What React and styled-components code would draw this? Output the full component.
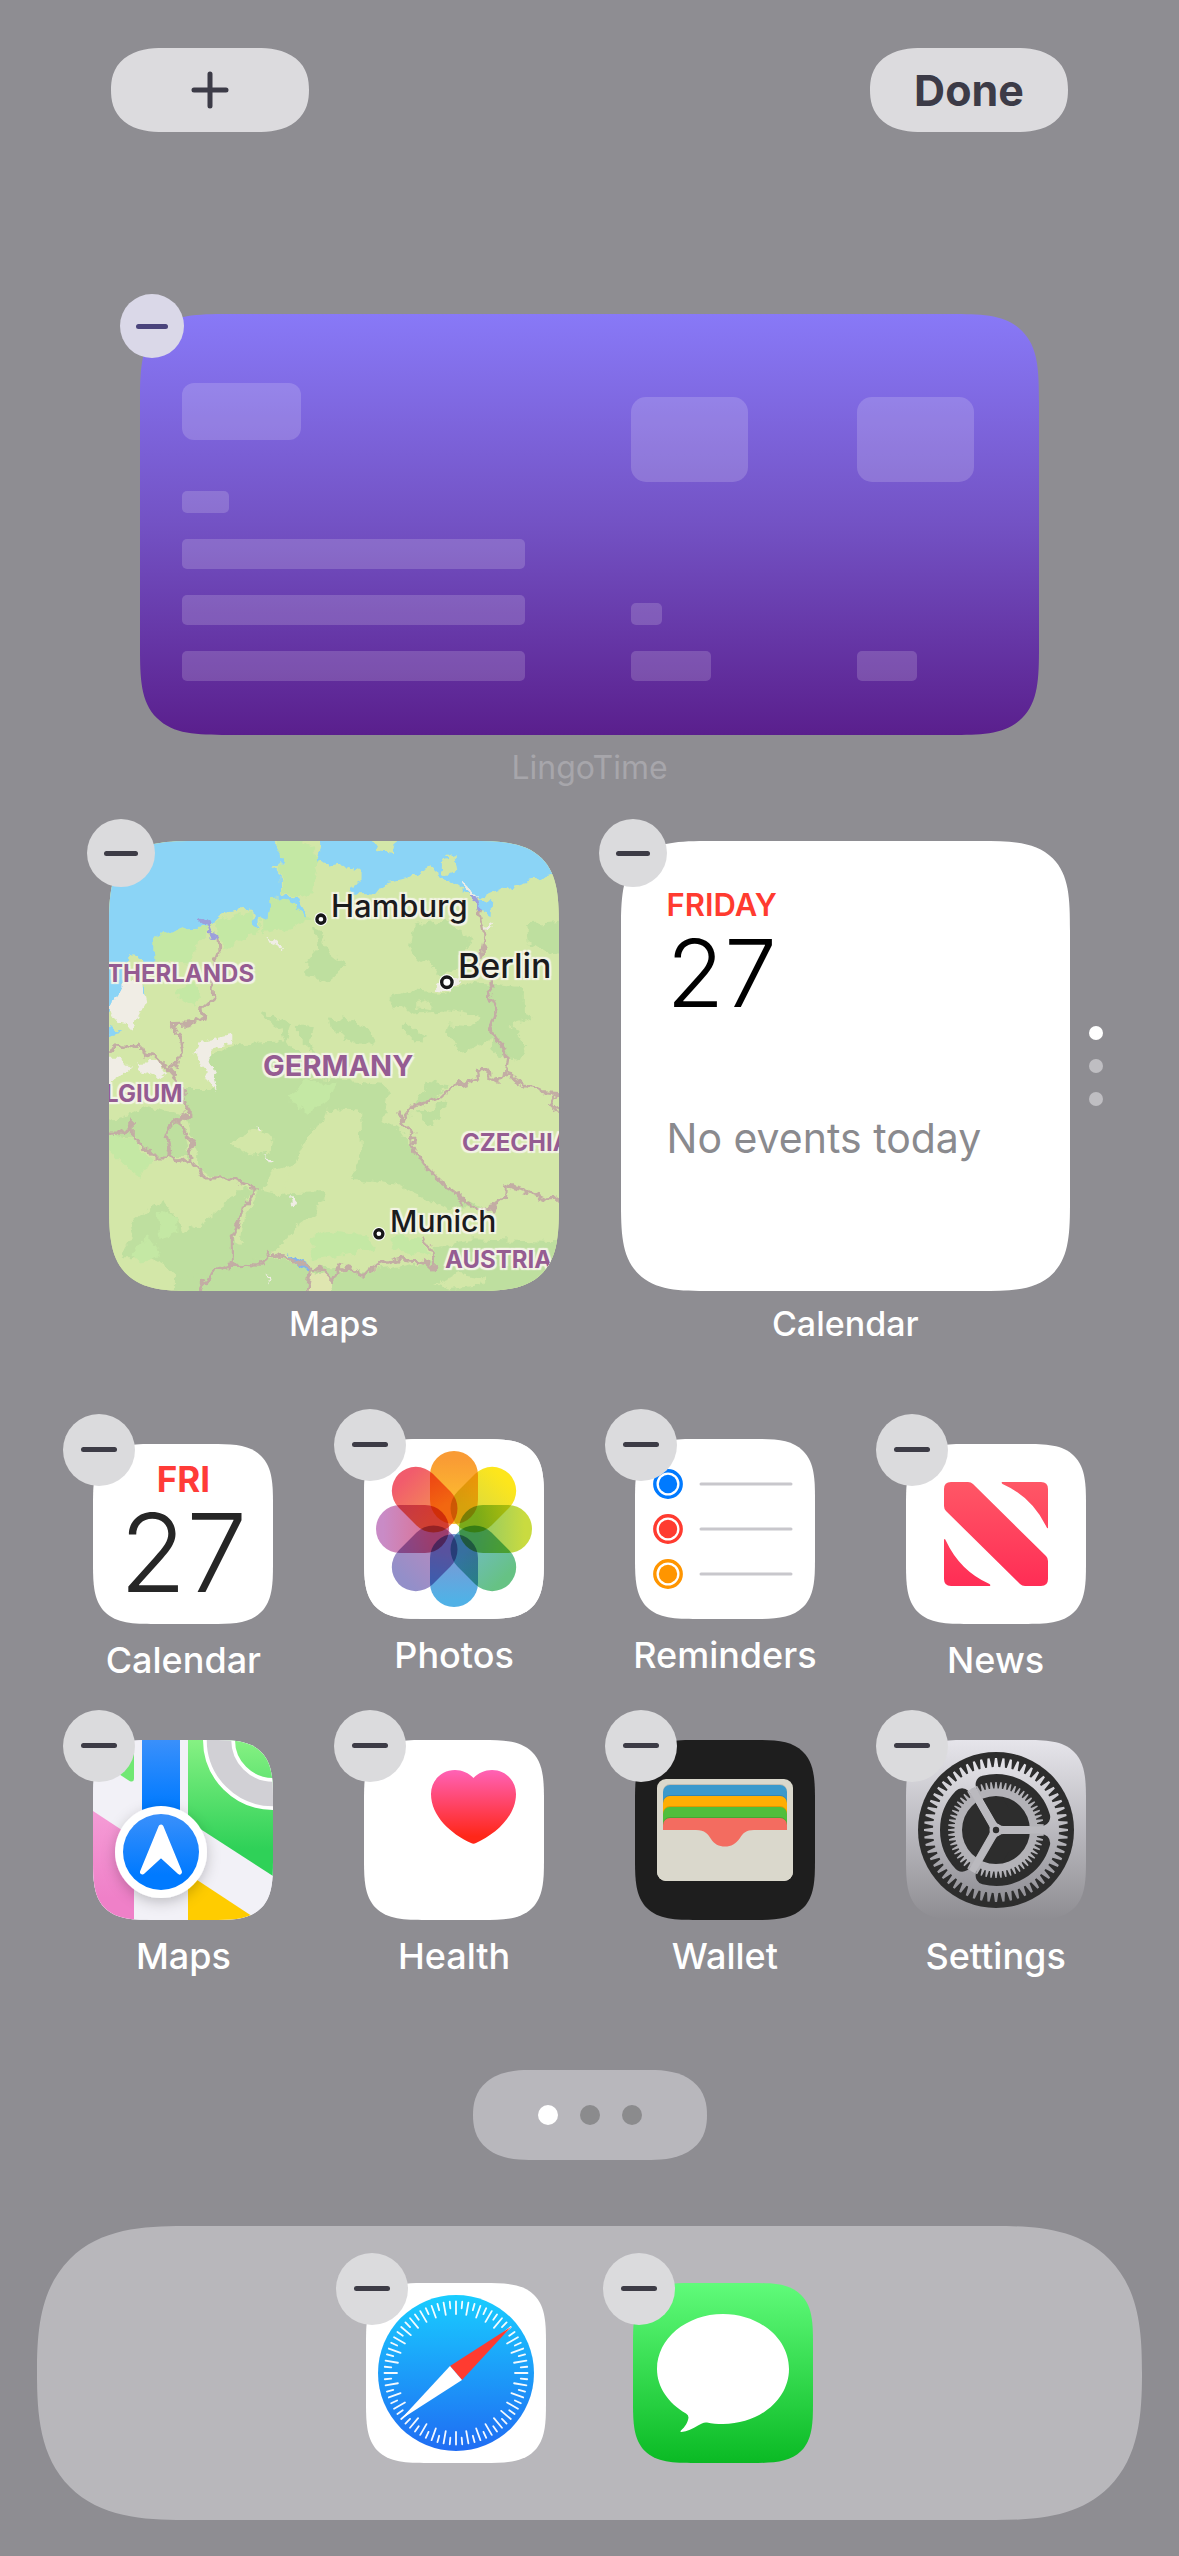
import React from "react";
import styled, { createGlobalStyle, css } from "styled-components";

const GlobalStyle = createGlobalStyle`
  *, *::before, *::after { box-sizing: border-box; }
  body {
    margin: 0;
    background: #8e8d92;
    font-family: Inter, "Liberation Sans", sans-serif;
    -webkit-font-smoothing: antialiased;
  }
  button { font: inherit; border: 0; padding: 0; cursor: pointer; }
  ul { list-style: none; margin: 0; padding: 0; }
  p, h2 { margin: 0; }
`;

/* Continuous corners where the browser knows them, round ones elsewhere. */
const corners = (round, smooth, curve = 1.7) => css`
  border-radius: ${round}px;
  @supports (corner-shape: superellipse(1.7)) {
    border-radius: ${smooth};
    corner-shape: superellipse(${curve});
  }
`;

const Screen = styled.main`
  min-height: 100vh;
  padding: 48px 0 36px;
  display: flex;
  flex-direction: column;
`;

const TopBar = styled.header`
  display: flex;
  justify-content: space-between;
  padding: 0 111px;
  margin-bottom: 182px;
`;

const PillButton = styled.button`
  width: 198px;
  height: 84px;
  display: flex;
  align-items: center;
  justify-content: center;
  background: #dcdbde;
  color: #3c3b47;
  font-size: 43px;
  font-weight: 700;
  line-height: 52px;
  ${corners(42, "52px / 42px", 1.25)}
`;

const RemoveButton = styled.button`
  position: absolute;
  top: ${(p) => p.$offset}px;
  left: ${(p) => p.$offset}px;
  width: ${(p) => p.$size}px;
  height: ${(p) => p.$size}px;
  border-radius: 50%;
  display: flex;
  align-items: center;
  justify-content: center;
  background: ${(p) => (p.$tinted ? "#dad8e8" : "#dbdbdd")};
  &::before {
    content: "";
    width: 50%;
    height: 5px;
    border-radius: 3px;
    background: ${(p) => (p.$tinted ? "#4a447c" : "#3d3c46")};
  }
`;

const WidgetCell = styled.section`
  position: relative;
`;

const WidgetLabel = styled.p`
  margin-top: 13px;
  text-align: center;
  font-size: ${(p) => (p.$dim ? 32 : 34)}px;
  font-weight: ${(p) => (p.$dim ? 400 : 500)};
  line-height: 40px;
  color: ${(p) => (p.$dim ? "#a7a6ab" : "#ffffff")};
`;

const WideRow = styled.div`
  padding: 0 140px;
  margin-bottom: 53px;
`;

const LingoCard = styled.div`
  height: 421px;
  padding-left: 42px;
  display: grid;
  grid-template-columns: 449fr 226fr 182fr;
  background: linear-gradient(#8879f7, #7352c4 50%, #5a1f8d);
  overflow: hidden;
  ${corners(60, "88px")}
`;

const SkeletonColumn = styled.div`
  display: flex;
  flex-direction: column;
  justify-content: space-between;
  padding: ${(p) => p.$top}px 0 54px;
`;

const SkeletonGroup = styled.div`
  display: flex;
  flex-direction: column;
  gap: 26px;
`;

const Skeleton = styled.div`
  width: ${(p) => p.$w}px;
  height: ${(p) => p.$h}px;
  border-radius: ${(p) => p.$r || 5}px;
  background: rgba(255, 255, 255, 0.17);
`;

const WidgetRow = styled.div`
  display: grid;
  grid-template-columns: 1fr 1fr;
  gap: 62px;
  padding: 0 109px;
  margin-bottom: 100px;
`;

const Square = styled.div`
  position: relative;
  aspect-ratio: 1;
  overflow: hidden;
  background: ${(p) => p.$bg};
  ${corners(60, "90px")}
`;

const MapArt = styled.svg`
  display: block;
  width: 100%;
  height: 100%;
`;

const MapLabel = styled.span`
  position: absolute;
  left: ${(p) => p.$x}px;
  top: ${(p) => p.$y}px;
  line-height: 1;
  white-space: nowrap;
  font-size: ${(p) => p.$size}px;
  font-weight: ${(p) => (p.$country ? 700 : 500)};
  color: ${(p) => (p.$country ? "#955c92" : "#1b1b1d")};
  text-shadow: 0 0 3px #f4f4e6, 0 0 3px #f4f4e6, 2px 2px 1px #f4f4e6,
    -2px -2px 1px #f4f4e6, 2px -2px 1px #f4f4e6, -2px 2px 1px #f4f4e6;
`;

const EventBody = styled.div`
  padding: 46px 46px 0;
`;

const Weekday = styled.p`
  font-size: 31px;
  font-weight: 600;
  line-height: 36px;
  color: #ff3b30;
`;

const DayNumber = styled.p`
  margin-top: 5px;
  font-size: 94px;
  font-weight: 300;
  line-height: 90px;
  color: #000;
`;

const EventNote = styled.p`
  margin-top: 95px;
  font-size: 41px;
  line-height: 50px;
  color: #8a8a8e;
  white-space: nowrap;
`;

const StackDots = styled.div`
  position: absolute;
  left: calc(100% + 19px);
  top: 185px;
  display: flex;
  flex-direction: column;
  gap: 19px;
`;

const Dot = styled.span`
  width: ${(p) => p.$size}px;
  height: ${(p) => p.$size}px;
  border-radius: 50%;
  background: ${(p) => p.$color};
`;

const AppGrid = styled.ul`
  display: grid;
  grid-template-columns: repeat(4, 1fr);
  row-gap: 58px;
  && {
    padding: 0 48px;
    margin-bottom: 92px;
  }
  justify-items: center;
`;

const Tile = styled.li`
  display: flex;
  flex-direction: column;
  align-items: center;
  margin-top: ${(p) => (p.$raised ? -5 : 0)}px;
`;

const IconBox = styled.div`
  position: relative;
  width: 180px;
  height: 180px;
`;

const IconFace = styled.div`
  width: 180px;
  height: 180px;
  overflow: hidden;
  background: ${(p) => p.$bg};
  ${corners(40, "62px")}
  svg { display: block; width: 100%; height: 100%; }
`;

const AppName = styled.span`
  margin-top: 14px;
  font-size: 36px;
  font-weight: 500;
  line-height: 44px;
  color: #fff;
  white-space: nowrap;
`;

const CalendarFace = styled.div`
  height: 100%;
  padding-top: 18px;
  display: flex;
  flex-direction: column;
  align-items: center;
`;

const FaceWeekday = styled.span`
  font-size: 35px;
  font-weight: 700;
  line-height: 34px;
  color: #ff3b38;
`;

const FaceDay = styled.span`
  margin-top: 8px;
  font-size: 109px;
  font-weight: 300;
  line-height: 96px;
  color: #262626;
`;

const Pager = styled.nav`
  align-self: center;
  width: 234px;
  height: 90px;
  display: flex;
  align-items: center;
  justify-content: center;
  gap: 22px;
  margin-bottom: 66px;
  background: #b8b7bc;
  ${corners(45, "56px / 45px", 1.25)}
`;

const Dock = styled.footer`
  height: 294px;
  margin: 0 37px;
  background: #b8b7bb;
  ${corners(120, "147px", 1.45)}
`;

const DockApps = styled.ul`
  height: 100%;
  display: flex;
  align-items: center;
  justify-content: center;
  gap: 87px;
`;

const polar = (r, deg, c = 90) => {
  const a = (deg * Math.PI) / 180;
  return [(c + r * Math.cos(a)).toFixed(2), (c + r * Math.sin(a)).toFixed(2)];
};

/* ---------- Icons ---------- */

function PhotosIcon() {
  const petals = [
    ["#f99b35", "#fdbd2e"], ["#fde61c", "#d9d93f"], ["#c9db40", "#8fc866"],
    ["#66c284", "#70bcc0"], ["#51b1e6", "#7c98d4"], ["#938fc9", "#b58abf"],
    ["#c98bc6", "#dc7192"], ["#f15c6c", "#f48b55"],
  ];
  return (
    <svg viewBox="0 0 180 180">
      <defs>
        {petals.map(([a, b], i) => (
          <linearGradient key={i} id={`petal${i}`} x1="0" y1="0" x2="0" y2="1">
            <stop offset="0.1" stopColor={a} />
            <stop offset="0.75" stopColor={b} />
          </linearGradient>
        ))}
      </defs>
      <g style={{ isolation: "isolate" }}>
        <rect width="180" height="180" fill="#fff" />
        {petals.map((_, i) => (
          <rect key={i} x="66" y="12" width="48" height="73" rx="24" fill={`url(#petal${i})`}
            transform={`rotate(${i * 45} 90 90)`} style={{ mixBlendMode: "multiply" }} />
        ))}
      </g>
      <circle cx="90" cy="90" r="5" fill="#fff" />
    </svg>
  );
}

function RemindersIcon() {
  return (
    <svg viewBox="0 0 180 180">
      {["#007aff", "#ff3b30", "#ff9500"].map((c, i) => (
        <g key={c}>
          <circle cx="33" cy={45 + i * 45} r="13.2" fill="none" stroke={c} strokeWidth="3.4" />
          <circle cx="33" cy={45 + i * 45} r="9.2" fill={c} />
          <path d={`M66 ${45 + i * 45}H156`} stroke="#c8c7cc" strokeWidth="3" strokeLinecap="round" />
        </g>
      ))}
    </svg>
  );
}

function NewsIcon() {
  return (
    <svg viewBox="0 0 180 180">
      <defs>
        <linearGradient id="news" gradientUnits="userSpaceOnUse" x1="0" y1="38" x2="0" y2="142">
          <stop stopColor="#ff5766" />
          <stop offset="1" stopColor="#ff2d55" />
        </linearGradient>
      </defs>
      <g fill="url(#news)">
        <path d="M38 45Q38 38 45 38H62Q65 38 67 40L140 112Q142 114 142 117V135Q142 142 135 142H119Q116 142 114 140L40 67Q38 65 38 62Z" />
        <path d="M96 38H135Q142 38 142 45V84Q141.500 85 140.500 83Q126 53 96.500 40Q95 39 96 38Z" />
        <path d="M84 142H45Q38 142 38 135V96Q38.500 94 39.800 96.500Q54 127 83.500 140Q85 141 84 142Z" />
      </g>
    </svg>
  );
}

function MapsIcon() {
  return (
    <svg viewBox="0 0 180 180">
      <defs>
        <linearGradient id="mg" x1="0" y1="0" x2="0" y2="1">
          <stop stopColor="#86f183" />
          <stop offset="0.8" stopColor="#2fd158" />
        </linearGradient>
        <linearGradient id="mb" gradientUnits="userSpaceOnUse" x1="0" y1="0" x2="0" y2="68">
          <stop stopColor="#3a90fb" />
          <stop offset="1" stopColor="#007aff" />
        </linearGradient>
        <linearGradient id="mc" x1="0" y1="0" x2="0" y2="1">
          <stop stopColor="#3a90fb" />
          <stop offset="0.8" stopColor="#007aff" />
        </linearGradient>
        <linearGradient id="mp" x1="0" y1="0" x2="0" y2="1">
          <stop stopColor="#f59cd6" />
          <stop offset="0.8" stopColor="#ef80c8" />
        </linearGradient>
        <filter id="ms" x="-40%" y="-40%" width="180%" height="180%">
          <feDropShadow dx="0" dy="4" stdDeviation="7" floodOpacity="0.22" />
        </filter>
      </defs>
      <rect width="180" height="180" fill="#f2f1f7" />
      <path d="M0 0H41V38Q41 43 36.500 41L0 17Z" fill="#70e873" />
      <path d="M0 71L41 98V180H0Z" fill="url(#mp)" />
      <path d="M95 0H180V136L95 81Z" fill="url(#mg)" />
      <path d="M95 134L180 190H95Z" fill="#ffcc00" />
      <circle cx="180" cy="0" r="54" fill="none" stroke="#fff" strokeWidth="32" />
      <circle cx="180" cy="0" r="54" fill="none" stroke="#d1d0d5" strokeWidth="24.500" />
      <rect x="49" width="38" height="90" fill="url(#mb)" />
      <circle cx="68" cy="112" r="46" fill="#fff" filter="url(#ms)" />
      <circle cx="68" cy="112" r="38" fill="url(#mc)" />
      <path d="M68 87L49.500 132L68 115L86.500 132Z" fill="#fff" stroke="#fff" strokeWidth="5" strokeLinejoin="round" />
    </svg>
  );
}

function HealthIcon() {
  return (
    <svg viewBox="0 0 180 180">
      <defs>
        <linearGradient id="heart" x1="0" y1="0" x2="0" y2="1">
          <stop stopColor="#ff62b6" />
          <stop offset="0.9" stopColor="#ff2719" />
        </linearGradient>
      </defs>
      <path fill="url(#heart)" d="M109.500 38C105 33 98 30 91 30C77 30 67 41 67 54C67 76 87 94 107 103Q109.500 104.500 112 103C132 94 152 76 152 54C152 41 142 30 128 30C121 30 114 33 109.500 38Z" />
    </svg>
  );
}

function WalletIcon() {
  const cards = [["#3a99cc", 45], ["#ffae03", 56], ["#4fbe3c", 67], ["#f36c60", 78]];
  return (
    <svg viewBox="0 0 180 180">
      <rect x="22" y="39" width="136" height="102" rx="9" fill="#dad8cc" />
      {cards.map(([c, y]) => (
        <g key={c}>
          <rect x="28" y={y - 1} width="124" height="30" rx="7" fill="#000" opacity="0.12" />
          <rect x="28" y={y} width="124" height="36" rx="7" fill={c} />
        </g>
      ))}
      <path d="M60 88H120V110H60Z" fill="#f36c60" />
      <path d="M22 90H61C70 90 73 94 76 99C79 104 84 106.500 90 106.500C96 106.500 101 104 105 98C108 93 111 90 119 90H158V132A9 9 0 0 1 149 141H31A9 9 0 0 1 22 132Z" fill="#dad8cc" />
    </svg>
  );
}

function gearPath(n, rTip, rRoot, rHole) {
  const pts = [];
  const step = 360 / n;
  for (let i = 0; i < n; i++) {
    const a = i * step;
    pts.push(polar(rRoot, a - step * 0.36), polar(rTip, a - step * 0.14));
    pts.push(polar(rTip, a + step * 0.14), polar(rRoot, a + step * 0.36));
  }
  const hole = rHole
    ? `M${90 + rHole} 90A${rHole} ${rHole} 0 1 0 ${90 - rHole} 90A${rHole} ${rHole} 0 1 0 ${90 + rHole} 90Z`
    : "";
  return `M${pts.map((p) => p.join(" ")).join("L")}Z${hole}`;
}

function SettingsIcon() {
  const outer = gearPath(60, 72, 63, 0);
  const inner = gearPath(60, 48, 41.5, 34);
  return (
    <svg viewBox="0 0 180 180">
      <defs>
        <linearGradient id="gear" gradientUnits="userSpaceOnUse" x1="0" y1="18" x2="0" y2="162">
          <stop stopColor="#e6e5ea" />
          <stop offset="1" stopColor="#8f8e94" />
        </linearGradient>
      </defs>
      <circle cx="90" cy="90" r="78" fill="#2d2d2d" />
      <path d={outer} fill="url(#gear)" />
      {[0, 120, 240].map((a) => {
        const v = polar(15, a + 60);
        const s = polar(47, a + 16);
        const e = polar(47, a + 104);
        return (
          <path key={a} d={`M${v.join(" ")}L${s.join(" ")}A47 47 0 0 1 ${e.join(" ")}Z`}
            fill="#2d2d2d" stroke="#2d2d2d" strokeWidth="18" strokeLinejoin="round" />
        );
      })}
      <path d={inner} fill="#b3b2b7" fillRule="evenodd" />
      {[0, 120, 240].map((a) => (
        <path key={a} d="M90 86.500H138V93.500H90Z" fill="#bab9be" transform={`rotate(${a} 90 90)`} />
      ))}
      <circle cx="90" cy="90" r="6.500" fill="#bab9be" />
      <circle cx="90" cy="90" r="3.200" fill="#2d2d2d" />
    </svg>
  );
}

function SafariIcon() {
  return (
    <svg viewBox="0 0 180 180">
      <defs>
        <linearGradient id="saf" x1="0" y1="0" x2="0" y2="1">
          <stop stopColor="#19cdff" />
          <stop offset="1" stopColor="#1f6cf3" />
        </linearGradient>
      </defs>
      <circle cx="90" cy="90" r="78" fill="url(#saf)" />
      {Array.from({ length: 72 }, (_, i) => {
        const p = polar(71.5, i * 5);
        const q = polar(i % 2 ? 65 : 59, i * 5);
        return <path key={i} d={`M${p.join(" ")}L${q.join(" ")}`} stroke="#fff" strokeWidth="1.800" strokeLinecap="round" opacity="0.95" />;
      })}
      <path d="M145.500 43.500L84 83L96 97Z" fill="#ff3b30" />
      <path d="M34.500 136.500L84 83L96 97Z" fill="#fff" />
    </svg>
  );
}

function MessagesIcon() {
  return (
    <svg viewBox="0 0 180 180">
      <path fill="#fff" d="M90 31C126.500 31 156 55.600 156 86C156 116.400 126.500 141 90 141C84 141 79 140.500 74 139.500C71 139 68 140.500 65 142.500C60 145.500 54 148.500 48.500 149Q46.500 149 48 147.500C52 144 55 139 55.500 134.500Q55.500 132 53 130.500C35 120 24 104 24 86C24 55.600 53.500 31 90 31Z" />
    </svg>
  );
}

/* ---------- Map of Germany ---------- */

const poly = (s) => `M${s.split(" ").join("L")}Z`;
const line = (s) => `M${s.split(" ").join("L")}`;

const WATER = [
  "20,20 575,20 580,90 600,130 603,150 575,162 600,180 602,235 615,246 568,250 558,300 540,310 540,326 525,330 510,315 530,300 515,282 490,280 430,288 410,305 395,325 320,328 250,345 218,365 218,428 180,432 175,412 150,408 135,432 20,445",
  "715,20 722,100 712,140 740,158 785,153 840,168 840,195 805,215 832,238 882,240 910,207 990,190 1050,160 1100,195 1150,230 1195,248 1250,225 1330,202 1500,160 1500,20",
  "1190,252 1232,250 1230,300 1212,286 1192,275",
  "20,430 140,430 130,500 112,525 85,560 20,580",
  "600,240 650,246 680,294 670,296 645,258 600,252",
  "80,600 105,612 125,620 80,630",
  "170,505 190,490 190,515",
];
const MARSH = [
  "585,20 640,20 665,95 720,130 700,180 690,235 660,247 605,235 603,180 585,162 605,150 590,110",
  "218,365 250,345 320,328 395,328 350,370 330,430 270,425 218,428",
  "410,305 515,285 525,330 545,330 470,372 430,390 415,350",
  "560,250 615,250 650,262 690,300 640,330 545,345 545,310",
  "20,890 85,905 160,925 215,980 180,1028 140,1000 85,950 20,950",
  "690,1200 760,1175 860,1190 890,1225 800,1240 700,1255",
  "620,795 690,755 765,770 750,810 680,845 640,820",
  "280,510 340,480 355,520 345,545 290,520",
  "230,1120 290,1140 290,1180 240,1200",
  "150,1240 200,1190 240,1240 190,1270",
  "940,1190 1030,1200 1040,1240 930,1230",
];
const FOREST = [
  "365,690 480,655 600,650 710,690 690,750 905,765 925,795 905,870 950,885 990,940 1040,1000 1140,1080 1205,1112 1100,1115 950,1050 810,1030 842,960 835,840 740,835 730,870 690,890 640,990 585,1070 740,1065 700,1130 650,1160 600,1220 560,1245 460,1275 440,1190 500,1080 530,1060 360,1010 340,930 320,850 300,780 400,780 380,740",
  "920,520 1000,505 1090,512 1180,480 1330,500 1330,570 1360,580 1290,600 1340,660 1320,695 1250,690 1230,640 1160,680 1090,630 1100,600 1180,605 1200,580 1100,560 1000,570 930,540",
  "1000,320 1090,310 1180,360 1150,400 1130,440 1080,470 1050,430 985,400",
  "1340,320 1480,310 1480,420 1345,380",
  "700,330 725,340 740,390 800,435 740,480 680,460 680,420 710,390",
  "745,580 800,585 860,610 885,650 820,650 750,615",
  "655,600 700,605 690,650 710,685 655,640",
  "545,565 632,600 612,655 600,610 545,575",
  "970,590 1040,640 1010,652 970,612",
  "20,885 120,860 200,830 300,850 330,970 220,970 160,920 20,905",
  "200,1115 245,1090 290,1140 310,1180 370,1150 440,1100 470,1060 525,1060 465,1180 455,1275 380,1300 280,1340 280,1290 200,1250 120,1250 160,1190 150,1150",
  "270,1380 290,1310 400,1290 560,1245 700,1280 860,1290 1050,1262 1060,1225 1180,1200 1480,1210 1480,1380",
  "960,862 1095,820 1060,885 1000,850",
  "1000,830 1040,760 1100,770 1060,815",
  "1150,1085 1210,1110 1150,1108",
];
const MEADOW = [
  "450,930 530,890 578,915 570,960 500,968",
  "570,1010 640,990 600,1075 545,1062",
  "850,80 880,97 890,112 937,118 945,80",
  "1075,145 1125,128 1130,170 1105,182 1075,165",
  "1010,540 1050,530 1045,560 1010,555",
  "1060,1325 1130,1300 1220,1310 1180,1330 1100,1340",
  "460,1200 500,1080 540,1065 490,1140 480,1210",
];
const TOWN = [
  "140,470 180,480 195,540 155,605 110,595 85,560 115,515",
  "345,680 360,648 455,628 455,655 380,665 400,740 412,785 390,770",
  "60,690 110,690 150,720 110,750 60,780",
  "170,705 235,700 260,735 240,750 180,730",
  "560,355 605,385 600,392 575,380",
  "1140,200 1190,240 1180,246 1145,215",
  "1215,325 1238,312 1232,330 1212,340",
  "545,965 578,990 560,990",
  "628,1072 660,1105 635,1108",
  "1060,500 1100,460 1140,478 1110,505",
  "550,1290 570,1300 575,1325",
  "528,880 540,900 530,895",
];
const BORDERS = [
  "412,350 415,400 400,435 370,460 395,490 400,525 360,560 375,580 330,598 278,600 290,630 305,670 295,705 265,725 290,750 305,790 325,850 300,870 305,900 340,930 325,975",
  "40,678 85,675 110,658 150,668 180,655 190,685 230,690 265,725",
  "40,903 135,903 155,873 155,925 185,935 220,970 270,970 290,983 330,975 355,1005 370,1028 440,1028 530,1060 485,1110 470,1165 455,1195 455,1270",
  "325,850 285,870 255,905 270,970",
  "350,1360 390,1288 455,1272 540,1275 565,1240 630,1255 690,1280 725,1285 755,1312 775,1275 850,1298 900,1272 960,1255 1030,1262 1060,1287 1055,1235 1025,1190",
  "675,1370 690,1285",
  "1195,280 1213,350 1205,395 1190,420 1235,490 1220,510 1245,555 1230,600 1245,640 1272,665 1278,700 1270,740 1290,735 1310,765 1350,775 1385,790 1430,793 1410,825 1470,855",
  "1272,740 1255,758 1225,750 1225,730 1190,728 1195,750 1115,778 1070,810 1000,828 970,865 955,850 965,878 1000,905 990,935 1035,995 1100,1055 1145,1085 1145,1110",
  "1145,1085 1195,1118 1235,1112 1272,1085 1275,1050 1330,1062 1395,1090 1480,1085",
];

const CITIES = [
  { name: "Hamburg", x: 222, y: 49, size: 31, cx: 212, cy: 78, r: 4 },
  { name: "Berlin", x: 349, y: 108, size: 34, cx: 338, cy: 141, r: 5.2 },
  { name: "Munich", x: 281, y: 365, size: 30, cx: 270, cy: 392, r: 4 },
];
const COUNTRIES = [
  { name: "THERLANDS", x: -2, y: 121, size: 24 },
  { name: "GERMANY", x: 154, y: 210, size: 29 },
  { name: "LGIUM", x: -4, y: 241, size: 24 },
  { name: "CZECHIA", x: 353, y: 290, size: 24 },
  { name: "AUSTRIA", x: 336, y: 407, size: 24 },
];

const Layer = ({ shapes, fill }) => shapes.map((s) => <path key={s} d={poly(s)} fill={fill} />);

function GermanyMap() {
  return (
    <>
      <MapArt viewBox="85 87 1349 1256" preserveAspectRatio="none" aria-hidden="true">
        <defs>
          <filter id="rough" filterUnits="userSpaceOnUse" x="0" y="0" width="1520" height="1420" colorInterpolationFilters="sRGB">
            <feTurbulence type="fractalNoise" baseFrequency="0.035" numOctaves="3" seed="4" />
            <feDisplacementMap in="SourceGraphic" scale="34" xChannelSelector="R" yChannelSelector="G" />
          </filter>
        </defs>
        <rect x="0" y="0" width="1520" height="1420" fill="#d3e7a8" />
        <g filter="url(#rough)">
          <Layer shapes={FOREST} fill="#bedf9f" />
          <Layer shapes={MARSH} fill="#c4e8a4" />
          <path d={poly("690,1290 750,1300 765,1380 680,1380")} fill="#dfe6b0" />
          <Layer shapes={WATER} fill="#8bd4f6" />
          <Layer shapes={MEADOW} fill="#d3e7a8" />
          <Layer shapes={TOWN} fill="#f0ede5" />
          <path d={poly("615,1238 660,1258 695,1278 690,1290 665,1284")} fill="#7fb4f0" />
          <g fill="none" stroke="#c3ada4" strokeWidth="9" strokeLinejoin="round">
            {BORDERS.map((b) => <path key={b} d={line(b)} />)}
          </g>
          <g fill="none" stroke="#9c9fdc" strokeWidth="9">
            <path d={line("355,303 380,320 390,345 415,352")} />
            <path d={line("1180,240 1195,280")} />
          </g>
        </g>
        {CITIES.map((c) => (
          <g key={c.name} fill="#fff">
            <ellipse cx={85 + c.cx * 3} cy={87 + c.cy * 2.8} rx={c.r * 3 + 8} ry={c.r * 2.8 + 8} />
            <ellipse cx={85 + c.cx * 3} cy={87 + c.cy * 2.8} rx={c.r * 3} ry={c.r * 2.8}
              stroke="#171719" strokeWidth="10" />
          </g>
        ))}
      </MapArt>
      {CITIES.map((c) => (
        <MapLabel key={c.name} $x={c.x} $y={c.y} $size={c.size}>{c.name}</MapLabel>
      ))}
      {COUNTRIES.map((c) => (
        <MapLabel key={c.name} $country $x={c.x} $y={c.y} $size={c.size}>{c.name}</MapLabel>
      ))}
    </>
  );
}

/* ---------- Screen ---------- */

const APPS = [
  {
    name: "Calendar", bg: "#fff",
    icon: <CalendarFace><FaceWeekday>FRI</FaceWeekday><FaceDay>27</FaceDay></CalendarFace>,
  },
  { name: "Photos", bg: "#fff", icon: <PhotosIcon />, raised: true },
  { name: "Reminders", bg: "#fff", icon: <RemindersIcon />, raised: true },
  { name: "News", bg: "#fff", icon: <NewsIcon /> },
  { name: "Maps", bg: "#f2f1f7", icon: <MapsIcon /> },
  { name: "Health", bg: "#fff", icon: <HealthIcon /> },
  { name: "Wallet", bg: "#1e1e1e", icon: <WalletIcon /> },
  { name: "Settings", bg: "linear-gradient(#e6e5eb, #8e8d92)", icon: <SettingsIcon /> },
];

const DOCK = [
  { name: "Safari", bg: "#fff", icon: <SafariIcon /> },
  { name: "Messages", bg: "linear-gradient(#60fb7a, #0aba24)", icon: <MessagesIcon /> },
];

function AppIcon({ app }) {
  return (
    <IconBox>
      <IconFace $bg={app.bg}>{app.icon}</IconFace>
      <RemoveButton $size={72} $offset={-30} aria-label={`Remove ${app.name}`} />
    </IconBox>
  );
}

export default function App() {
  return (
    <>
      <GlobalStyle />
      <Screen>
        <TopBar>
          <PillButton aria-label="Add widget">
            <svg width="38" height="38" viewBox="0 0 38 38" stroke="currentColor" strokeWidth="5" strokeLinecap="round">
              <path d="M19 3V35M3 19H35" />
            </svg>
          </PillButton>
          <PillButton>Done</PillButton>
        </TopBar>

        <WideRow>
          <WidgetCell>
            <LingoCard>
              <SkeletonColumn $top={69}>
                <Skeleton $w={119} $h={57} $r={12} />
                <SkeletonGroup>
                  <Skeleton $w={47} $h={22} />
                  <Skeleton $w={343} $h={30} />
                  <Skeleton $w={343} $h={30} />
                  <Skeleton $w={343} $h={30} />
                </SkeletonGroup>
              </SkeletonColumn>
              <SkeletonColumn $top={83}>
                <Skeleton $w={117} $h={85} $r={15} />
                <SkeletonGroup>
                  <Skeleton $w={31} $h={22} />
                  <Skeleton $w={80} $h={30} />
                </SkeletonGroup>
              </SkeletonColumn>
              <SkeletonColumn $top={83}>
                <Skeleton $w={117} $h={85} $r={15} />
                <Skeleton $w={60} $h={30} />
              </SkeletonColumn>
            </LingoCard>
            <RemoveButton $size={64} $offset={-20} $tinted aria-label="Remove LingoTime" />
            <WidgetLabel $dim>LingoTime</WidgetLabel>
          </WidgetCell>
        </WideRow>

        <WidgetRow>
          <WidgetCell>
            <Square $bg="#d3e7a8"><GermanyMap /></Square>
            <RemoveButton $size={68} $offset={-22} aria-label="Remove Maps widget" />
            <WidgetLabel>Maps</WidgetLabel>
          </WidgetCell>
          <WidgetCell>
            <Square $bg="#fff">
              <EventBody>
                <Weekday>FRIDAY</Weekday>
                <DayNumber>27</DayNumber>
                <EventNote>No events today</EventNote>
              </EventBody>
            </Square>
            <RemoveButton $size={68} $offset={-22} aria-label="Remove Calendar widget" />
            <StackDots>
              <Dot $size={14} $color="#fff" />
              <Dot $size={14} $color="#bfbec2" />
              <Dot $size={14} $color="#bfbec2" />
            </StackDots>
            <WidgetLabel>Calendar</WidgetLabel>
          </WidgetCell>
        </WidgetRow>

        <AppGrid>
          {APPS.map((app) => (
            <Tile key={app.name} $raised={app.raised}>
              <AppIcon app={app} />
              <AppName>{app.name}</AppName>
            </Tile>
          ))}
        </AppGrid>

        <Pager aria-label="Pages">
          <Dot $size={20} $color="#fff" />
          <Dot $size={20} $color="#8b8b8d" />
          <Dot $size={20} $color="#8b8b8d" />
        </Pager>

        <Dock>
          <DockApps>
            {DOCK.map((app) => (
              <li key={app.name}><AppIcon app={app} /></li>
            ))}
          </DockApps>
        </Dock>
      </Screen>
    </>
  );
}
